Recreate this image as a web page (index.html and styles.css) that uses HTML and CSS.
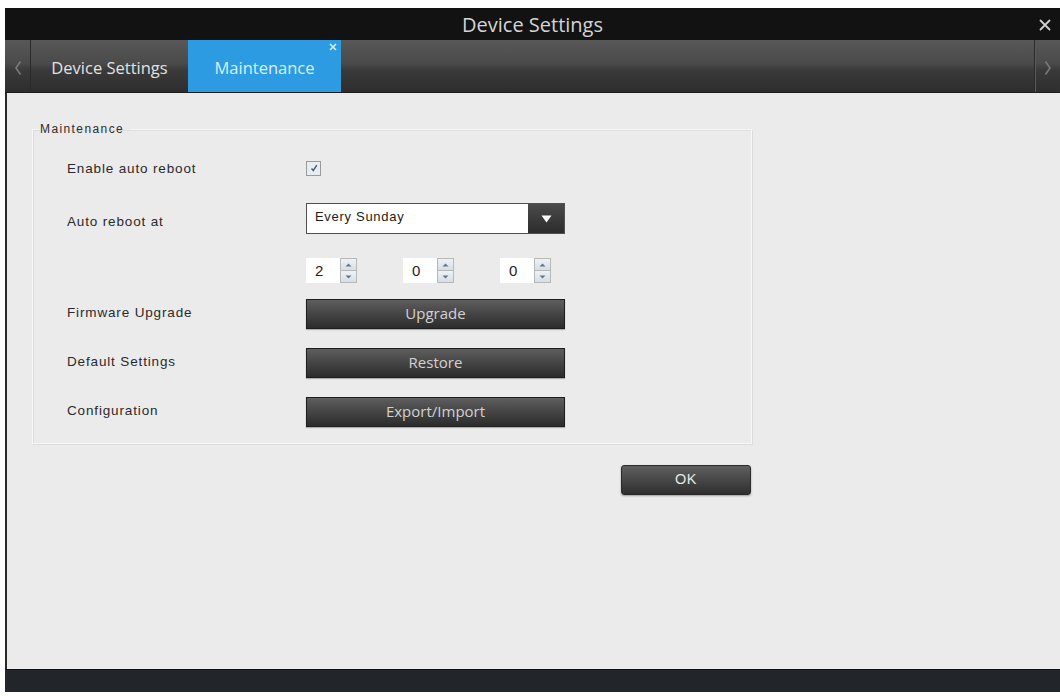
FILE: index.html
```html
<!DOCTYPE html>
<html>
<head>
<meta charset="utf-8">
<link rel="stylesheet" href="styles.css">
</head>
<body>
<div class="window">
  <div class="titlebar">
    <span></span>
    <span class="title">Device Settings</span>
    <span class="close">
      <svg width="12" height="12" viewBox="0 0 12 12"><path d="M1.5 1.5 L10.5 10.5 M10.5 1.5 L1.5 10.5" stroke="#cfcfcf" stroke-width="1.8" stroke-linecap="round"/></svg>
    </span>
  </div>
  <div class="tabbar">
    <div class="nav nav-left">
      <svg width="8" height="16" viewBox="0 0 8 16"><path d="M6.5 1.5 L2 8 L6.5 14.5" fill="none" stroke="#7a7a7a" stroke-width="1.6"/></svg>
    </div>
    <div class="tab">Device Settings</div>
    <div class="tab active">Maintenance
      <span class="tab-close"><svg width="8" height="8" viewBox="0 0 8 8"><path d="M1 1 L7 7 M7 1 L1 7" stroke="#d6ecfb" stroke-width="1.6"/></svg></span>
    </div>
    <div class="tab-fill"></div>
    <div class="nav nav-right">
      <svg width="8" height="16" viewBox="0 0 8 16"><path d="M1.5 1.5 L6 8 L1.5 14.5" fill="none" stroke="#7a7a7a" stroke-width="1.6"/></svg>
    </div>
  </div>
  <div class="content">
    <fieldset class="group">
      <legend class="group-title">Maintenance</legend>
      <div class="row row-check">
        <span class="label">Enable auto reboot</span>
        <span class="checkbox">
          <svg width="10" height="10" viewBox="0 0 10 10"><path d="M2.5 5.5 L4.3 7.6 L7.8 2.2" fill="none" stroke="#4a5a78" stroke-width="1.5"/></svg>
        </span>
      </div>
      <div class="row row-select">
        <span class="label">Auto reboot at</span>
        <div class="select">
          <span class="select-value">Every Sunday</span>
          <span class="select-arrow">
            <svg width="11" height="8" viewBox="0 0 11 8"><path d="M0.5 0.5 L10.5 0.5 L5.5 7.5 Z" fill="#ffffff"/></svg>
          </span>
        </div>
      </div>
      <div class="row row-spin">
        <span class="label"></span>
        <div class="spins">
          <div class="spin"><span class="spin-value">2</span><span class="spin-btns"><span class="spin-up"><svg width="7" height="4" viewBox="0 0 7 4"><path d="M0.5 3.5 L3.5 0.5 L6.5 3.5 Z" fill="#6a7480"/></svg></span><span class="spin-down"><svg width="7" height="4" viewBox="0 0 7 4"><path d="M0.5 0.5 L6.5 0.5 L3.5 3.5 Z" fill="#6a7480"/></svg></span></span></div>
          <div class="spin"><span class="spin-value">0</span><span class="spin-btns"><span class="spin-up"><svg width="7" height="4" viewBox="0 0 7 4"><path d="M0.5 3.5 L3.5 0.5 L6.5 3.5 Z" fill="#6a7480"/></svg></span><span class="spin-down"><svg width="7" height="4" viewBox="0 0 7 4"><path d="M0.5 0.5 L6.5 0.5 L3.5 3.5 Z" fill="#6a7480"/></svg></span></span></div>
          <div class="spin"><span class="spin-value">0</span><span class="spin-btns"><span class="spin-up"><svg width="7" height="4" viewBox="0 0 7 4"><path d="M0.5 3.5 L3.5 0.5 L6.5 3.5 Z" fill="#6a7480"/></svg></span><span class="spin-down"><svg width="7" height="4" viewBox="0 0 7 4"><path d="M0.5 0.5 L6.5 0.5 L3.5 3.5 Z" fill="#6a7480"/></svg></span></span></div>
        </div>
      </div>
      <div class="row row-btn row-b1">
        <span class="label">Firmware Upgrade</span>
        <button class="btn">Upgrade</button>
      </div>
      <div class="row row-btn">
        <span class="label">Default Settings</span>
        <button class="btn">Restore</button>
      </div>
      <div class="row row-btn">
        <span class="label">Configuration</span>
        <button class="btn">Export/Import</button>
      </div>
    </fieldset>
    <div class="actions">
      <button class="ok">OK</button>
    </div>
  </div>
  <div class="footer"></div>
</div>
</body>
</html>
```

FILE: styles.css
```css
html, body {
  margin: 0;
  padding: 0;
  background: #ffffff;
}

body {
  font-family: "Liberation Sans", Arial, sans-serif;
}

.window {
  margin: 8px 0 0 5px;
  width: 1055px;
  height: 684px;
  display: flex;
  flex-direction: column;
  background: #ebebeb;
}

.titlebar {
  height: 32px;
  flex: none;
  background: #121212;
  display: grid;
  grid-template-columns: 1fr auto 1fr;
  align-items: center;
}

.title {
  font-family: "Open Sans", "Noto Sans", sans-serif;
  font-size: 20px;
  color: #d4d4d4;
  line-height: 32px;
  margin-top: 1px;
}

.close {
  justify-self: end;
  margin-right: 9px;
  display: flex;
  align-items: center;
}

.tabbar {
  height: 53px;
  flex: none;
  display: flex;
  background: linear-gradient(#585858 0%, #4a4a4a 45%, #3a3a3a 58%, #2d2d2d 100%);
  border-bottom: 1px solid #1c1c1c;
  box-sizing: border-box;
}

.nav {
  width: 26px;
  flex: none;
  display: flex;
  align-items: center;
  justify-content: center;
  padding-top: 4px;
  box-sizing: border-box;
}

.nav-left {
  border-right: 1px solid #2a2a2a;
}

.nav-right {
  border-left: 1px solid #2a2a2a;
  box-shadow: inset 1px 0 0 #5a5a5a;
}

.tab {
  width: 157px;
  flex: none;
  display: flex;
  align-items: center;
  justify-content: center;
  font-family: "Open Sans", "Noto Sans", sans-serif;
  font-size: 16.5px;
  color: #e2e2e2;
  padding-top: 3px;
  box-sizing: border-box;
  position: relative;
}

.tab.active {
  width: 153px;
  background: #2c9be2;
  color: #d8effd;
}

.tab-close {
  position: absolute;
  top: 3px;
  right: 4px;
  display: flex;
}

.tab-fill {
  flex: 1;
}

.content {
  flex: 1;
  border-left: 2px solid #2a2a2a;
  padding: 28px 0 0 25px;
  box-sizing: border-box;
}

.group {
  width: 720px;
  box-sizing: border-box;
  margin: 0;
  padding: 0 0 16px 34px;
  border: 1px solid #f7f7f7;
  box-shadow: 1px 1px 0 #dcdcdc, inset 1px 1px 0 #dedede;
}

.group-title {
  font-size: 12px;
  line-height: 16px;
  color: #2e2e2e;
  letter-spacing: 1.4px;
  margin-left: -27px;
  padding: 0 6px 0 0;
}

.row {
  display: flex;
  align-items: center;
}

.label {
  width: 239px;
  flex: none;
  font-size: 13.5px;
  color: #2a2a2a;
  letter-spacing: 0.85px;
}

.row-check {
  height: 30px;
  margin-top: 16px;
}

.checkbox {
  width: 13px;
  height: 13px;
  border: 1px solid #9a9a9a;
  background: #e8ecf3;
  display: flex;
  align-items: center;
  justify-content: center;
}

.row-select {
  height: 31px;
  margin-top: 20px;
}

.row-select .label {
  padding-top: 5px;
}

.select {
  width: 259px;
  height: 31px;
  box-sizing: border-box;
  border: 1px solid #505050;
  background: #ffffff;
  display: flex;
  align-items: stretch;
}

.select-value {
  flex: 1;
  font-size: 13px;
  letter-spacing: 0.7px;
  color: #1c1c1c;
  padding: 5px 0 0 8px;
}

.select-arrow {
  width: 36px;
  background: linear-gradient(#4a4a4a, #2c2c2c);
  display: flex;
  align-items: center;
  justify-content: center;
}

.row-spin {
  height: 25px;
  margin-top: 24px;
}

.spins {
  display: flex;
  gap: 45px;
}

.spin {
  display: flex;
  width: 52px;
  height: 25px;
}

.spin-value {
  width: 34px;
  background: #ffffff;
  font-size: 15px;
  color: #222;
  padding-left: 9px;
  box-sizing: border-box;
  line-height: 25px;
}

.spin-btns {
  width: 17px;
  display: flex;
  flex-direction: column;
  border: 1px solid #b8b8b8;
  box-sizing: border-box;
}

.spin-up, .spin-down {
  flex: 1;
  background: linear-gradient(#eef2f5, #d6dfe6);
  display: flex;
  align-items: center;
  justify-content: center;
}

.spin-down {
  border-top: 1px solid #b8b8b8;
}

.row-btn {
  height: 30px;
  margin-top: 19px;
}

.row-b1 {
  margin-top: 16px;
}

.row-btn .label {
  padding-bottom: 4px;
}

.btn {
  width: 259px;
  height: 30px;
  margin: 0;
  padding: 0 0 2px;
  border: 1px solid #1e1e1e;
  background: linear-gradient(#5e5e5e 0%, #444444 50%, #2c2c2c 100%);
  color: #d2d2d2;
  font-family: "Open Sans", "Noto Sans", sans-serif;
  font-size: 15px;
  box-shadow: 0 1px 1px rgba(0,0,0,0.25);
}

.actions {
  width: 720px;
  display: flex;
  justify-content: flex-end;
  margin-top: 21px;
}

.ok {
  width: 130px;
  height: 30px;
  margin: 0 1px 0 0;
  padding: 0 0 2px;
  border: 1px solid #2a2a2a;
  border-radius: 3px;
  background: linear-gradient(#5e5e5e 0%, #474747 50%, #2f2f2f 100%);
  color: #e6e6e6;
  font-family: "Liberation Sans", Arial, sans-serif;
  font-size: 14.5px;
  letter-spacing: 0.5px;
  box-shadow: 0 1px 2px rgba(0,0,0,0.35);
}

.footer {
  height: 22px;
  flex: none;
  background: #22262a;
  border-top: 1px solid #111;
}
```
